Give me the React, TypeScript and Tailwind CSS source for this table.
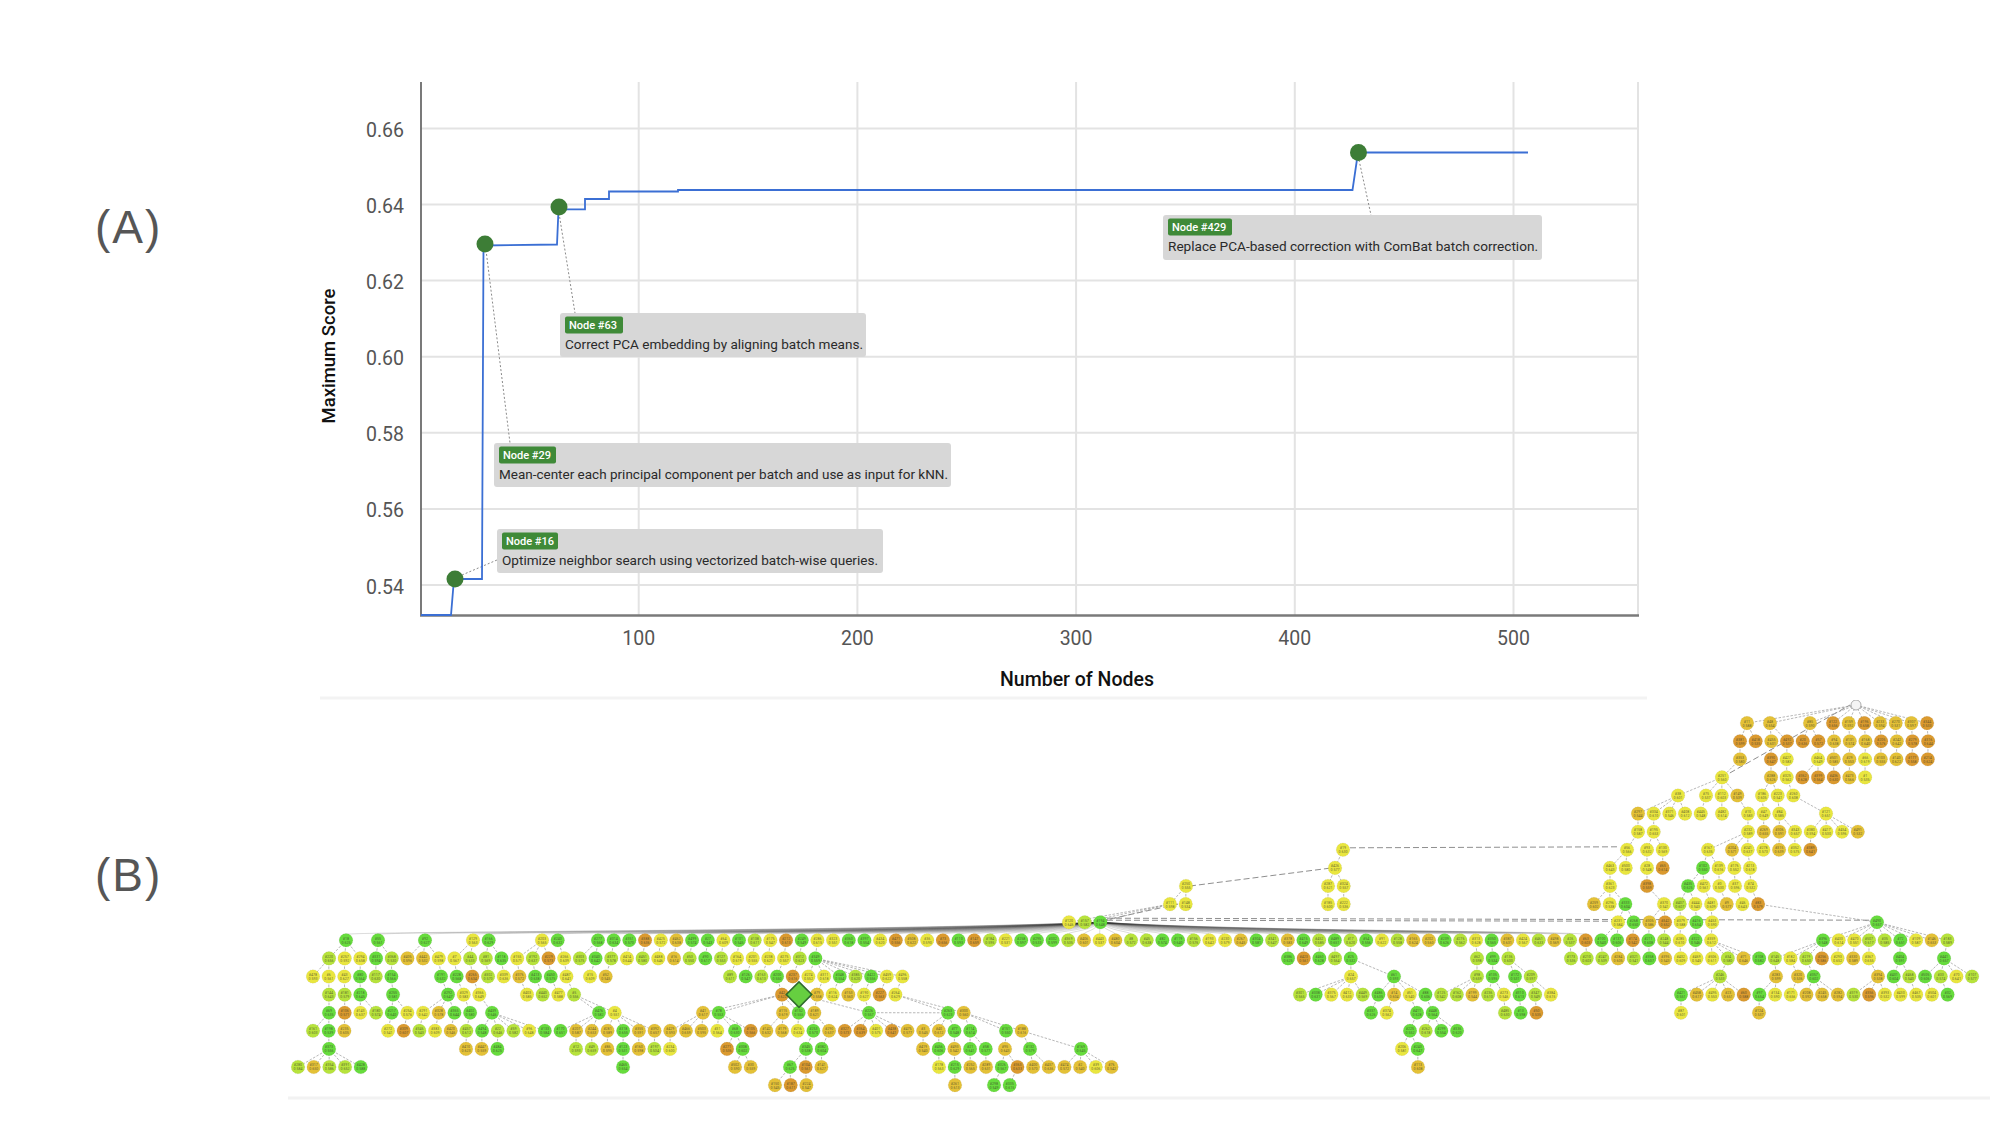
import React from 'react'

const FONT = "Roboto, 'Liberation Sans', Arial, sans-serif"

// ---------- chart (A) ----------
const px = (n: number) => 420 + 2.187 * n
const py = (v: number) => 585 - ((v - 0.54) / 0.02) * 76.1

const yTicks = [0.54, 0.56, 0.58, 0.6, 0.62, 0.64, 0.66]
const xTicks = [100, 200, 300, 400, 500]

const stepPath =
  'M421 615 H451 L454 579 H482 L483.5 245.5 L557 244.5 L558.5 209.3 H585 V199 H609 V191.5 H678 V190 H1352.5 L1358 152.5 H1528'

type Note = {
  id: number
  text: string
  box: [number, number, number, number]
  badgeW: number
  lead: [number, number, number, number]
}

const notes: Note[] = [
  {
    id: 63,
    text: 'Correct PCA embedding by aligning batch means.',
    box: [560, 313, 306, 44],
    badgeW: 58,
    lead: [559, 213, 575, 313],
  },
  {
    id: 29,
    text: 'Mean-center each principal component per batch and use as input for kNN.',
    box: [494, 443, 457, 44],
    badgeW: 57,
    lead: [486, 250, 510, 443],
  },
  {
    id: 16,
    text: 'Optimize neighbor search using vectorized batch-wise queries.',
    box: [497, 529, 386, 44],
    badgeW: 56,
    lead: [462, 575, 497, 560],
  },
  {
    id: 429,
    text: 'Replace PCA-based correction with ComBat batch correction.',
    box: [1163, 215, 379, 45],
    badgeW: 64,
    lead: [1359, 160, 1371, 215],
  },
]

const textWidths: Record<number, number> = { 63: 298, 29: 449, 16: 376, 429: 370 }

const dots: [number, number][] = [
  [455, 579],
  [485, 244],
  [559, 207],
  [1358.5, 152.5],
]

const ScoreChart = () => (
  <svg width={1400} height={700} viewBox="300 0 1400 700" className="block shrink-0">
    {yTicks.map((v) => (
      <line key={v} x1={421} x2={1638} y1={py(v)} y2={py(v)} stroke="#e3e3e3" strokeWidth={2} />
    ))}
    {xTicks.map((n) => (
      <line key={n} x1={px(n)} x2={px(n)} y1={82} y2={615} stroke="#e3e3e3" strokeWidth={2} />
    ))}
    <line x1={1638} x2={1638} y1={82} y2={615} stroke="#e3e3e3" strokeWidth={2} />
    <line x1={421} x2={421} y1={82} y2={616} stroke="#6b6b6b" strokeWidth={1.8} />
    <line x1={420} x2={1639} y1={615.5} y2={615.5} stroke="#7a7a7a" strokeWidth={2.5} />

    {yTicks.map((v) => (
      <text
        key={v}
        x={404}
        y={py(v) + 8.5}
        textAnchor="end"
        fontFamily={FONT}
        fontSize={19.5}
        fill="#555"
      >
        {v.toFixed(2)}
      </text>
    ))}
    {xTicks.map((n) => (
      <text
        key={n}
        x={px(n)}
        y={645}
        textAnchor="middle"
        fontFamily={FONT}
        fontSize={19.5}
        fill="#555"
      >
        {n}
      </text>
    ))}
    <text
      transform="translate(335 356) rotate(-90)"
      textAnchor="middle"
      fontFamily={FONT}
      fontSize={18.5}
      fontWeight={500}
      fill="#111"
    >
      Maximum Score
    </text>
    <text x={1077} y={686} textAnchor="middle" fontFamily={FONT} fontSize={19.5} fontWeight={500} fill="#111">
      Number of Nodes
    </text>

    {notes.map((n) => (
      <line
        key={`l${n.id}`}
        x1={n.lead[0]}
        y1={n.lead[1]}
        x2={n.lead[2]}
        y2={n.lead[3]}
        stroke="#8a8a8a"
        strokeWidth={1}
        strokeDasharray="2 2"
      />
    ))}

    <path d={stepPath} fill="none" stroke="#3b6fd4" strokeWidth={1.8} />
    {dots.map(([x, y]) => (
      <circle key={x} cx={x} cy={y} r={8.5} fill="#3d7d36" />
    ))}

    {notes.map((n) => {
      const [x, y, w, h] = n.box
      return (
        <g key={n.id}>
          <rect x={x} y={y} width={w} height={h} rx={3} fill="#d7d7d7" />
          <rect x={x + 5} y={y + 3.5} width={n.badgeW} height={17} rx={2} fill="#3f8a38" />
          <text x={x + 9} y={y + 16} fontFamily={FONT} fontSize={11} fontWeight={500} fill="#fff">
            Node #{n.id}
          </text>
          <text
            x={x + 5}
            y={y + 35.5}
            fontFamily={FONT}
            fontSize={13}
            fill="#2a2a2a"
            textLength={textWidths[n.id]}
            lengthAdjust="spacingAndGlyphs"
          >
            {n.text}
          </text>
        </g>
      )
    })}
    <line x1={320} x2={1647} y1={698} y2={698} stroke="#f3f3f3" strokeWidth={3} />
  </svg>
)

// ---------- search tree (B) ----------
const SP = 15.68
const rowY = (k: number) => 705 + 18.1 * k

const fills: Record<string, string> = {
  G: '#67dc3d',
  L: '#b7e33c',
  Y: '#e9e63f',
  A: '#e4c137',
  O: '#db9a2f',
}

type Run = [number, number, string]

const runs: Run[] = [
  [1, 1747, 'A'], [1, 1770, 'A'], [1, 1810, 'A'], [1, 1833, 'OAOAAAO'],
  [2, 1740, 'OOAOOOAAAOAOO'],
  [3, 1740, 'A'], [3, 1771, 'OY'], [3, 1818, 'YAAYAAOO'],
  [4, 1722, 'Y'], [4, 1771, 'AYOOOAY'],
  [5, 1678, 'Y'], [5, 1706, 'YYA'], [5, 1762, 'YYY'],
  [6, 1638, 'AYYYY'], [6, 1722, 'Y'], [6, 1748, 'YYY'], [6, 1826, 'Y'],
  [7, 1638, 'YY'], [7, 1748, 'YAAYYYYA'],
  [8, 1343, 'Y'], [8, 1627, 'Y'], [8, 1647, 'YY'], [8, 1708, 'Y'], [8, 1732, 'AYYAYO'],
  [9, 1335, 'Y'], [9, 1610, 'YY'], [9, 1647, 'YO'], [9, 1703, 'GYYY'],
  [10, 1186, 'Y'], [10, 1328, 'YY'], [10, 1610, 'Y'], [10, 1647, 'O'], [10, 1688, 'GYYYY'],
  [11, 1170, 'YY'], [11, 1328, 'YY'], [11, 1594, 'AYG'], [11, 1664, 'YLYYAYO'],
  [12, 1069, 'YLG'], [12, 1618, 'YGAOYGY'], [12, 1877, 'G'],
  [13, 346, 'G'], [13, 378, 'G'], [13, 425, 'G'], [13, 473, 'YG'], [13, 542, 'YG'],
  [13, 598, 'GGGOYAGGY'],
  [13, 739, 'GLYOGYYGGYOAYOGOLYGGGLAYALLGGLYYAGLAGLGLGYLAAGLYGAYLALOGGOGLYGY'],
  [13, 1823, 'GYY'], [13, 1869, 'LLGYAL'],
  [14, 329, 'LYYGLAAYYLLGYLOYLGLYLYALGL'], [14, 737, 'YYYYLG'], [14, 1288, 'GOGLG'],
  [14, 1477, 'LGL'], [14, 1571, 'LLLALGAYYYLAGLYLOYAY'], [14, 1900, 'G'], [14, 1944, 'G'],
  [15, 313, 'YYYGLG'], [15, 441, 'GGOLYAGGY'], [15, 590, 'YA'], [15, 730, 'LGLGOYYGLGYY'],
  [15, 1351, 'Y'], [15, 1394, 'G'], [15, 1477, 'LG'], [15, 1515, 'GL'], [15, 1720, 'L'],
  [15, 1776, 'A'], [15, 1798, 'AG'], [15, 1878, 'AGLGLYL'],
  [16, 329, 'LLG'], [16, 393, 'G'], [16, 448, 'GYY'], [16, 527, 'YLYL'], [16, 782, 'O'],
  [16, 817, 'AYAYOY'], [16, 1300, 'LGYYLGAYGLLALYGLY'], [16, 1681, 'GAYAOGYYAAALOYYYYG'],
  [17, 329, 'GOYLGYYAGG'], [17, 492, 'G'], [17, 599, 'GY'], [17, 703, 'AG'], [17, 783, 'AGA'],
  [17, 869, 'G'], [17, 948, 'GA'], [17, 1371, 'GY'], [17, 1417, 'GG'], [17, 1505, 'LGO'],
  [17, 1681, 'Y'], [17, 1759, 'A'],
  [18, 313, 'LGA'], [18, 388, 'YOLYALGLLYGGAAAGAAAAAY'], [18, 735, 'GOAAYGAOOYOAAAGG'],
  [18, 1006, 'GA'], [18, 1410, 'GLGG'],
  [19, 329, 'G'], [19, 466, 'AAG'], [19, 576, 'LLAGALY'], [19, 727, 'OG'], [19, 806, 'GG'],
  [19, 923, 'AGAGG'], [19, 1005, 'A'], [19, 1030, 'G'], [19, 1081, 'G'], [19, 1402, 'YG'],
  [20, 298, 'LALLG'], [20, 623, 'G'], [20, 735, 'AA'], [20, 790, 'GOA'],
  [20, 939, 'YGAAGOAAAAYA'], [20, 1418, 'A'],
  [21, 775, 'AOA'], [21, 955, 'A'], [21, 994, 'GG'],
]

type TreeNode = { k: number; x: number; y: number; c: string; id: number }

const nodes: TreeNode[] = []
runs.forEach(([k, x0, cs]) => {
  cs.split('').forEach((c, i) => {
    nodes.push({ k, x: x0 + i * SP, y: rowY(k), c, id: 0 })
  })
})
nodes.forEach((n, i) => {
  n.id = (i * 37 + 11) % 509
})

const root = { x: 1856, y: rowY(0) }
const hub = { x: 1100, y: rowY(12) }
const diamond = { x: 799, y: rowY(16) }

const byRow = (k: number) => nodes.filter((n) => n.k === k)

type Edge = { x1: number; y1: number; x2: number; y2: number; bundle?: boolean }
const edges: Edge[] = []
nodes.forEach((n) => {
  if (n.k === 1) {
    edges.push({ x1: root.x, y1: root.y, x2: n.x, y2: n.y })
    return
  }
  if (n.k === 13 && n.x < 1600) {
    edges.push({ x1: hub.x, y1: hub.y, x2: n.x, y2: n.y, bundle: true })
    return
  }
  const prev = byRow(n.k - 1)
  let best: TreeNode | null = null
  prev.forEach((p) => {
    if (!best || Math.abs(p.x - n.x) < Math.abs(best.x - n.x)) best = p
  })
  const b = best as TreeNode | null
  if (b && Math.abs(b.x - n.x) <= 140) edges.push({ x1: b.x, y1: b.y, x2: n.x, y2: n.y })
})
edges.push({ x1: diamond.x, y1: diamond.y, x2: 783 + SP, y2: rowY(17) })
edges.push({ x1: diamond.x, y1: diamond.y, x2: 869, y2: rowY(17) })
edges.push({ x1: 869, y1: rowY(17), x2: 948, y2: rowY(17) + 0.1 })

const longEdges: [number, number, number, number][] = [
  [1350, rowY(8) - 2, 1620, rowY(8) - 3],
  [1190, rowY(10), 1332, rowY(9)],
  [1107, rowY(12) - 2, 1612, rowY(12) - 1],
  [1107, rowY(12) - 4, 1870, rowY(12) - 2],
  [1178, rowY(11), 1095, rowY(12)],
  [1722, rowY(4), 1850, rowY(0)],
]

const SearchTree = () => (
  <svg width={1720} height={425} viewBox="280 700 1720 425" className="block shrink-0">
    {edges.map((e, i) =>
      e.bundle ? (
        <path
          key={i}
          d={`M${e.x1} ${e.y1} C${e.x1 + (e.x2 - e.x1) * 0.3} ${e.y1 + 9} ${e.x2 - (e.x2 - e.x1) * 0.03} ${e.y1 + 9} ${e.x2} ${e.y2 - 6}`}
          fill="none"
          stroke="#2b2b2b"
          strokeOpacity={0.28}
          strokeWidth={0.6}
        />
      ) : (
        <line
          key={i}
          x1={e.x1}
          y1={e.y1}
          x2={e.x2}
          y2={e.y2}
          stroke="#9a9a9a"
          strokeWidth={0.7}
          strokeDasharray="2.5 1.5"
        />
      ),
    )}
    {longEdges.map(([x1, y1, x2, y2], i) => (
      <line
        key={`le${i}`}
        x1={x1}
        y1={y1}
        x2={x2}
        y2={y2}
        stroke="#8f8f8f"
        strokeWidth={1}
        strokeDasharray="6 3"
      />
    ))}
    <circle cx={root.x} cy={root.y} r={5} fill="#f4f4f4" stroke="#9a9a9a" strokeWidth={0.8} />
    {nodes.map((n, i) => (
      <g key={i}>
        <circle
          cx={n.x}
          cy={n.y}
          r={6.8}
          fill={fills[n.c]}
          stroke="#000"
          strokeOpacity={0.12}
          strokeWidth={0.7}
          strokeDasharray="1 0.8"
        />
        <text
          x={n.x}
          y={n.y - 0.6}
          textAnchor="middle"
          fontFamily={FONT}
          fontSize={3.6}
          fill="#3a3a2a"
          fillOpacity={0.75}
        >
          <tspan x={n.x}>#{n.id}</tspan>
          <tspan x={n.x} dy={4}>
            0.{(5300 + ((n.id * 53) % 1300)).toString().slice(0, 3)}
          </tspan>
        </text>
      </g>
    ))}
    <rect
      x={diamond.x - 9}
      y={diamond.y - 9}
      width={18}
      height={18}
      transform={`rotate(45 ${diamond.x} ${diamond.y})`}
      fill="#66cf40"
      stroke="#2f6a2c"
      strokeWidth={1.6}
    />
    <line x1={288} x2={1990} y1={1098} y2={1098} stroke="#f2f2f2" strokeWidth={3} />
  </svg>
)

export default function App() {
  return (
    <div className="flex h-[1125px] w-[2000px] flex-col bg-white">
      <div className="flex h-[700px]">
        <div className="w-[300px] shrink-0 pl-[95px] pt-[204px]">
          <span className="font-['Liberation_Sans',Arial,sans-serif] text-[46px] leading-none tracking-[2px] text-[#565656]">
            (A)
          </span>
        </div>
        <ScoreChart />
      </div>
      <div className="flex h-[425px]">
        <div className="w-[280px] shrink-0 pl-[95px] pt-[152px]">
          <span className="font-['Liberation_Sans',Arial,sans-serif] text-[46px] leading-none tracking-[2px] text-[#565656]">
            (B)
          </span>
        </div>
        <SearchTree />
      </div>
    </div>
  )
}
